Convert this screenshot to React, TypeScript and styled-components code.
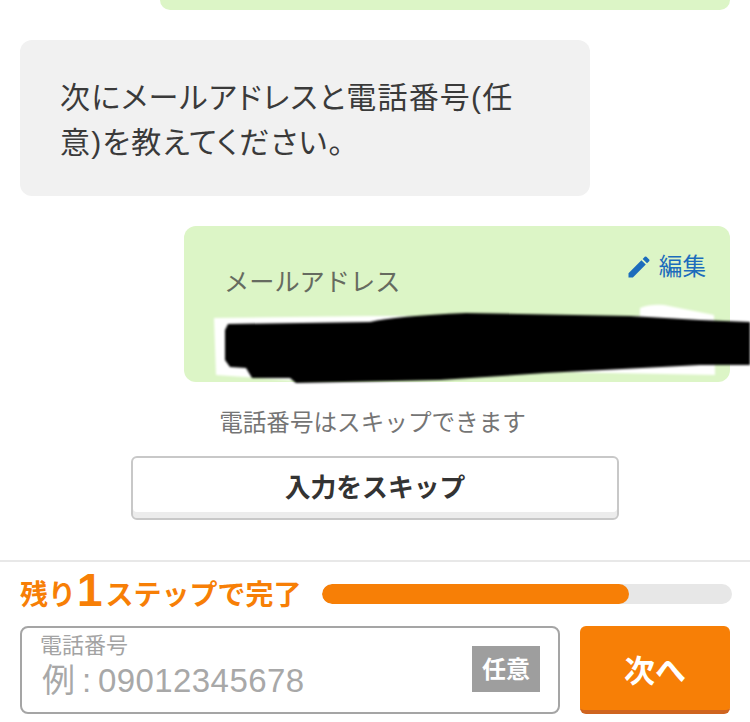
import React from 'react';
import styled, { createGlobalStyle } from 'styled-components';
import { MdEdit } from 'react-icons/md';

const orange = '#f77f06';
const progress = 74.8;

const GlobalStyle = createGlobalStyle`
  html, body {
    margin: 0;
    padding: 0;
    background: #fff;
    overflow: hidden;
  }

  * {
    box-sizing: border-box;
  }

  body {
    font-family: 'Liberation Sans', 'Noto Sans CJK JP', sans-serif;
    color: #333;
  }
`;

const Page = styled.div`
  display: flex;
  flex-direction: column;
  width: 750px;
  height: 722px;
  overflow: hidden;
`;

const Chat = styled.div`
  display: flex;
  flex-direction: column;
  height: 560px;
  padding: 0 20px;
`;

const PreviousAnswer = styled.div`
  align-self: flex-end;
  width: 570px;
  height: 10px;
  margin-bottom: 30px;
  background: #dcf5c6;
  border-radius: 0 0 10px 10px;
`;

const Question = styled.p`
  width: 570px;
  height: 156px;
  margin: 0 0 30px;
  padding: 35px 60px 0 40px;
  background: #f1f1f1;
  border-radius: 12px;
  font-size: 30px;
  font-feature-settings: 'palt';
  letter-spacing: 1.2px;
  line-height: 45px;
  color: #3a3a3a;
`;

const Answer = styled.div`
  position: relative;
  align-self: flex-end;
  display: flex;
  align-items: flex-start;
  justify-content: space-between;
  width: 546px;
  height: 156px;
  padding: 25px 24px 0 40px;
  background: #dcf5c6;
  border-radius: 12px;
`;

const AnswerLabel = styled.span`
  margin-top: 15px;
  font-size: 25.2px;
  line-height: 32px;
  color: #666b60;
`;

const EditLink = styled.span`
  display: flex;
  align-items: center;
  gap: 6px;
  font-size: 23.6px;
  line-height: 32px;
  color: #1c6cbc;
`;

const Redaction = styled.svg`
  position: absolute;
  left: 0;
  top: 0;
  width: 566px;
  height: 160px;
  overflow: visible;
  filter: blur(1px);
`;

const SkipHint = styled.p`
  margin: 25px 0 17px;
  padding-right: 5px;
  font-size: 23.6px;
  line-height: 32px;
  text-align: center;
  color: #757575;
`;

const SkipButton = styled.button`
  align-self: center;
  width: 488px;
  height: 64px;
  padding: 0 0 5px;
  background: #fff;
  border: 2px solid #c8c8c8;
  border-radius: 6px;
  box-shadow: inset 0 -6px 0 #ececec;
  font-family: inherit;
  font-size: 25.8px;
  font-weight: 700;
  color: #333;
`;

const Footer = styled.footer`
  display: flex;
  flex-direction: column;
  gap: 12px;
  height: 162px;
  padding: 12px 20px 0;
  border-top: 2px solid #e8e8e8;
`;

const ProgressRow = styled.div`
  display: flex;
  align-items: center;
  gap: 22px;
  height: 40px;
  margin-right: -2px;
`;

const ProgressTitle = styled.div`
  flex-shrink: 0;
  width: 280px;
  margin-top: -3px;
  font-size: 28px;
  line-height: 40px;
  font-weight: 700;
  white-space: nowrap;
  color: ${orange};
`;

const StepCount = styled.span`
  margin: 0 3px 0 1px;
  font-size: 46px;
  line-height: 40px;
  vertical-align: -1px;
`;

const ProgressTrack = styled.div`
  flex: 1;
  height: 20px;
  background: #e7e7e7;
  border-radius: 10px;
  overflow: hidden;
`;

const ProgressFill = styled.div`
  height: 100%;
  background: ${orange};
  border-radius: 10px;
`;

const InputRow = styled.div`
  display: flex;
  gap: 20px;
  height: 88px;
`;

const InputBox = styled.label`
  display: flex;
  align-items: center;
  justify-content: space-between;
  width: 540px;
  padding: 0 18px 0 18px;
  border: 2px solid #a5a5a5;
  border-radius: 8px;
`;

const InputFields = styled.div`
  display: flex;
  flex-direction: column;
  align-self: flex-start;
  padding-top: 6px;
`;

const InputCaption = styled.span`
  font-size: 22px;
  line-height: 24px;
  color: #a3a3a3;
`;

const PhoneInput = styled.input`
  width: 400px;
  height: 36px;
  margin-top: 5px;
  padding: 0 0 0 2px;
  border: 0;
  outline: 0;
  background: transparent;
  font-family: inherit;
  font-size: 33px;
  letter-spacing: 0.4px;
  word-spacing: -3px;

  &::placeholder {
    color: #a8a8a8;
    opacity: 1;
  }
`;

const OptionalBadge = styled.span`
  display: flex;
  align-items: center;
  justify-content: center;
  width: 68px;
  height: 46px;
  margin-top: -2px;
  padding-bottom: 3px;
  background: #9e9e9e;
  font-size: 24px;
  font-weight: 700;
  color: #fff;
`;

const NextButton = styled.button`
  width: 150px;
  height: 88px;
  padding: 0;
  background: ${orange};
  border: 0;
  border-bottom: 4px solid #cf6420;
  border-radius: 6px;
  font-family: inherit;
  font-size: 31px;
  font-weight: 700;
  color: #fff;
`;

const App: React.FC = () => (
  <Page>
    <GlobalStyle />
    <Chat>
      <PreviousAnswer />
      <Question>次にメールアドレスと電話番号(任意)を教えてください。</Question>
      <Answer>
        <AnswerLabel>メールアドレス</AnswerLabel>
        <EditLink>
          <MdEdit size={28} />
          編集
        </EditLink>
        <Redaction viewBox="184 226 566 160" aria-hidden="true">
          <path
            d="M214 318 L370 316 L640 316 L640 308 Q650 304 664 305 L714 315 L715 375 L560 372 L300 381 L216 375 Z"
            fill="#fff"
          />
          <path
            d="M228 324 L370 322 Q395 316 466 313 L630 316 L700 320 L750 322 L750 365 L700 365 L545 373 L440 380 L296 383 L290 378 L252 378 L246 368 L230 367 L225 360 L225 330 Z"
            fill="#000"
          />
        </Redaction>
      </Answer>
      <SkipHint>電話番号はスキップできます</SkipHint>
      <SkipButton type="button">入力をスキップ</SkipButton>
    </Chat>
    <Footer>
      <ProgressRow>
        <ProgressTitle>
          残り<StepCount>1</StepCount>ステップで完了
        </ProgressTitle>
        <ProgressTrack>
          <ProgressFill style={{ width: `${progress}%` }} />
        </ProgressTrack>
      </ProgressRow>
      <InputRow>
        <InputBox>
          <InputFields>
            <InputCaption>電話番号</InputCaption>
            <PhoneInput type="tel" placeholder="例 : 09012345678" />
          </InputFields>
          <OptionalBadge>任意</OptionalBadge>
        </InputBox>
        <NextButton type="button">次へ</NextButton>
      </InputRow>
    </Footer>
  </Page>
);

export default App;
